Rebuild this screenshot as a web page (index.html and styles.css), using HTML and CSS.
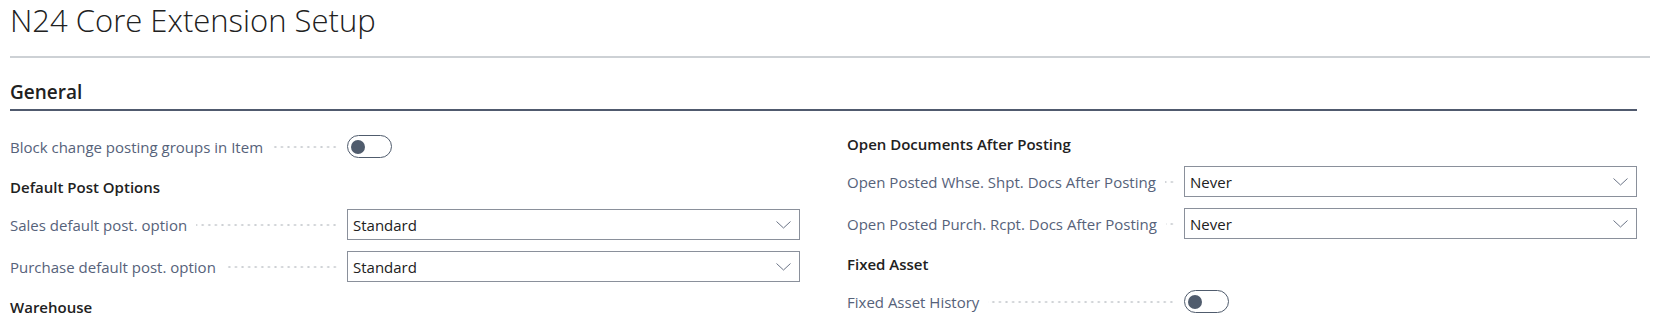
FILE: index.html
```html
<!DOCTYPE html>
<html>
	<head>
		<meta charset="utf-8">
		<title>N24 Core Extension Setup</title>
		<link rel="stylesheet" href="styles.css">
	</head>
	<body>
		<h1 class="title">N24 Core Extension Setup</h1>
		<section class="group">
			<h2 class="group-head">General</h2>
			<div class="cols">
				<div class="col">
					<div class="field first">
						<span class="caption">Block change posting groups in Item</span>
						<span class="dots"></span>
						<span class="toggle"><i></i></span>
					</div>
					<h3 class="sub">Default Post Options</h3>
					<div class="field">
						<span class="caption">Sales default post. option</span>
						<span class="dots"></span>
						<div class="select">
							<span>Standard</span>
							<svg width="15" height="8" viewBox="0 0 15 8"><path d="M0.5 0.5 L7.5 7 L14.5 0.5" fill="none" stroke="#6b7486" stroke-width="1"/></svg>
						</div>
					</div>
					<div class="field">
						<span class="caption">Purchase default post. option</span>
						<span class="dots"></span>
						<div class="select">
							<span>Standard</span>
							<svg width="15" height="8" viewBox="0 0 15 8"><path d="M0.5 0.5 L7.5 7 L14.5 0.5" fill="none" stroke="#6b7486" stroke-width="1"/></svg>
						</div>
					</div>
					<h3 class="sub">Warehouse</h3>
				</div>
				<div class="col">
					<h3 class="sub first">Open Documents After Posting</h3>
					<div class="field">
						<span class="caption">Open Posted Whse. Shpt. Docs After Posting</span>
						<span class="dots"></span>
						<div class="select">
							<span>Never</span>
							<svg width="15" height="8" viewBox="0 0 15 8"><path d="M0.5 0.5 L7.5 7 L14.5 0.5" fill="none" stroke="#6b7486" stroke-width="1"/></svg>
						</div>
					</div>
					<div class="field">
						<span class="caption">Open Posted Purch. Rcpt. Docs After Posting</span>
						<span class="dots"></span>
						<div class="select">
							<span>Never</span>
							<svg width="15" height="8" viewBox="0 0 15 8"><path d="M0.5 0.5 L7.5 7 L14.5 0.5" fill="none" stroke="#6b7486" stroke-width="1"/></svg>
						</div>
					</div>
					<h3 class="sub">Fixed Asset</h3>
					<div class="field">
						<span class="caption">Fixed Asset History</span>
						<span class="dots"></span>
						<span class="toggle"><i></i></span>
					</div>
				</div>
			</div>
		</section>
	</body>
</html>
```

FILE: styles.css
```css
body {
	margin: 0;
	padding: 0 20px 0 10px;
	font-family: "Open Sans", "Noto Sans", sans-serif;
	color: #212121;
	background: #fff;
	overflow: hidden;
}

.title {
	margin: 0;
	font-size: 31px;
	font-weight: 300;
	line-height: 40px;
	color: #212121;
	padding-bottom: 16px;
	border-bottom: 2px solid #cdd1d5;
}

.group {
	width: 1627px;
	margin-top: 21px;
}

.group-head {
	margin: 0;
	font-size: 19px;
	font-weight: 600;
	line-height: 26px;
	padding-bottom: 4px;
	border-bottom: 2px solid #505a6e;
}

.cols {
	display: grid;
	grid-template-columns: 790px 790px;
	column-gap: 47px;
	padding-top: 23px;
}

.sub {
	margin: 0 0 12px;
	padding-top: 4px;
	font-size: 15px;
	font-weight: 600;
	line-height: 20px;
	color: #212121;
}

.sub.first {
	padding-top: 0;
}

.field {
	display: flex;
	align-items: center;
	height: 31px;
	margin-bottom: 11px;
}

.field.first {
	margin-top: -3px;
}

.caption {
	font-size: 15px;
	color: #56627a;
	white-space: nowrap;
}

.dots {
	flex: 1;
	height: 4px;
	margin: 0 9px 0 9px;
	background-image: radial-gradient(circle, #cdd0d4 0.9px, transparent 1.3px);
	background-size: 6.6px 4px;
	background-repeat: repeat-x;
	background-position: right center;
}

.select {
	width: 453px;
	height: 31px;
	box-sizing: border-box;
	border: 1px solid #8a909b;
	display: flex;
	align-items: center;
	justify-content: space-between;
	padding: 0 8px 0 5px;
	font-size: 15px;
	color: #212121;
	flex: none;
}

.select svg {
	display: block;
}

.toggle {
	flex: none;
	width: 45px;
	height: 23px;
	box-sizing: border-box;
	border: 1px solid #505c6d;
	border-radius: 12px;
	display: flex;
	align-items: center;
	padding-left: 3px;
	margin-right: 408px;
}

.toggle i {
	width: 14px;
	height: 14px;
	border-radius: 50%;
	background: #505c6d;
}
```
